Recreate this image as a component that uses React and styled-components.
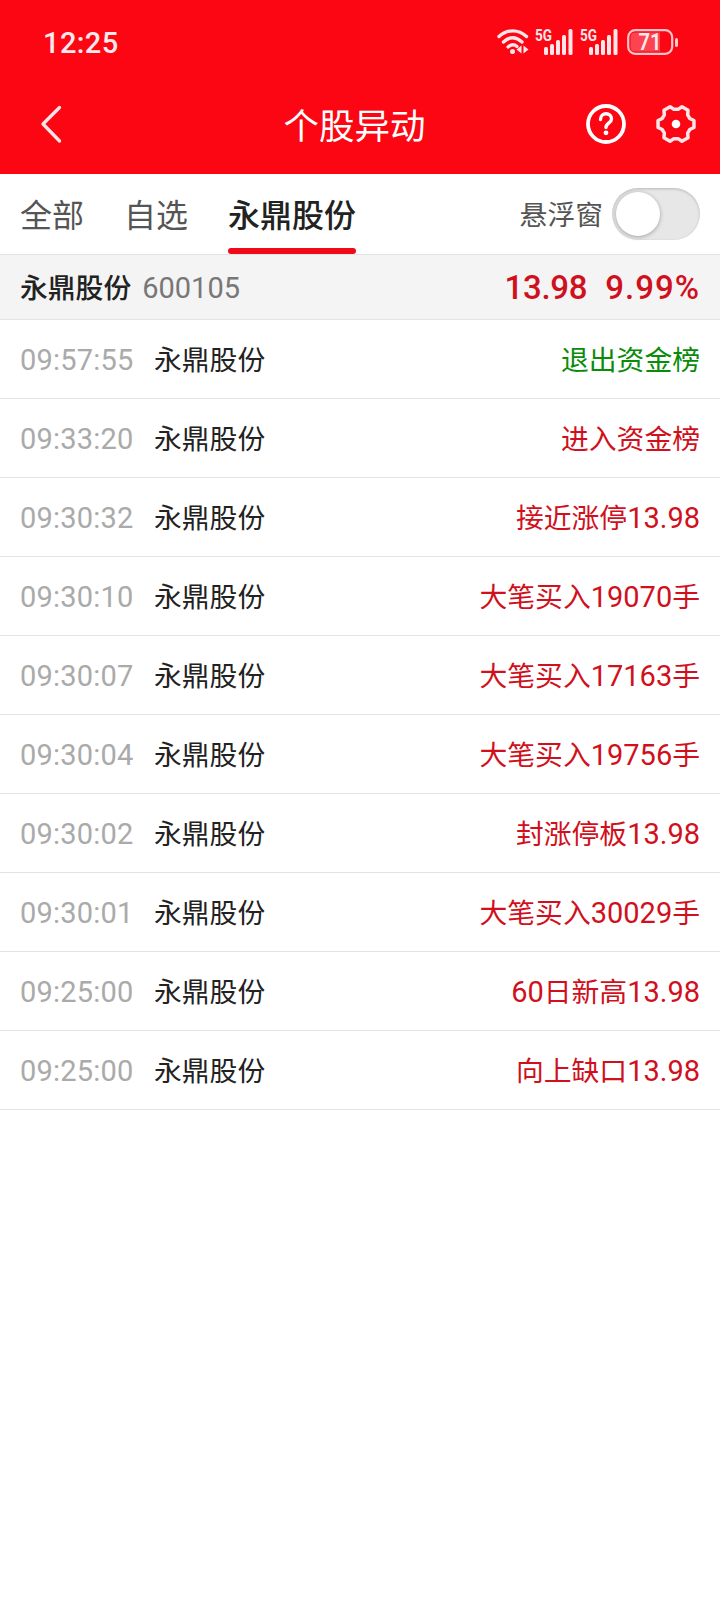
import React from "react";
import styled, { createGlobalStyle } from "styled-components";

const cjk = '"Noto Sans CJK SC", sans-serif';

const GlobalStyle = createGlobalStyle`
  * { box-sizing: border-box; }
  body { margin: 0; background: #fff; font-family: ${cjk}; }
`;

const Screen = styled.main`
  display: flex;
  flex-direction: column;
  width: 720px;
  min-height: 1610px;
  background: #fff;
`;

const Header = styled.header`
  height: 174px;
  background: #fb0612;
  color: #fff;
`;

const StatusBar = styled.div`
  display: flex;
  align-items: center;
  justify-content: space-between;
  height: 84px;
  padding: 0 41px 0 43px;
`;

const Clock = styled.time`
  padding-top: 1px;
  font: 500 29px/36px Roboto, sans-serif;
  letter-spacing: 0.4px;
  color: #ffe9ec;
`;

const StatusIcons = styled.div`
  display: flex;
  align-items: center;
`;

const StatusSvg = styled.svg`
  display: block;
  margin-left: ${(p) => p.$gap || 0}px;
`;

const TitleBar = styled.div`
  display: grid;
  grid-template-columns: 110px 1fr 121px;
  align-items: center;
  height: 80px;
  padding: 0 24px 0 35px;
`;

const Title = styled.h1`
  margin: 0;
  padding-right: 11px;
  font-size: 35.5px;
  line-height: 50px;
  font-weight: 400;
  text-align: center;
`;

const Actions = styled.div`
  display: flex;
  justify-content: flex-end;
  gap: 30px;
`;

const IconButton = styled.button`
  display: flex;
  padding: 0;
  border: 0;
  background: none;
  color: inherit;
`;

const TabBar = styled.nav`
  display: flex;
  justify-content: space-between;
  height: 81px;
  padding: 0 20px;
  border-bottom: 1px solid #e3e3e3;
`;

const Tabs = styled.div`
  display: flex;
  gap: 40px;
`;

const Tab = styled.button`
  display: flex;
  flex-direction: column;
  justify-content: space-between;
  height: 80px;
  padding: 15px 0 0;
  border: 0;
  background: none;
  font: ${(p) => (p.$active ? 500 : 400)} 32px/48px ${cjk};
  color: ${(p) => (p.$active ? "#222" : "#555")};

  &::after {
    content: "";
    width: 100%;
    height: 6px;
    border-radius: 3px;
    background: ${(p) => (p.$active ? "#f00a18" : "transparent")};
  }
`;

const FloatSetting = styled.label`
  display: flex;
  align-items: center;
  gap: 9px;
  font-size: 27.8px;
  line-height: 40px;
  color: #555;
`;

const Caption = styled.span`
  padding-bottom: 2px;
`;

const Switch = styled.span`
  display: flex;
  width: 88px;
  height: 52px;
  padding: 4px;
  border-radius: 26px;
  background: #e7e7e7;
  box-shadow: inset 0 1px 3px rgba(0, 0, 0, 0.2);
`;

const Knob = styled.span`
  width: 44px;
  height: 44px;
  border-radius: 50%;
  background: #fff;
  box-shadow: 0 1px 4px rgba(0, 0, 0, 0.3);
`;

const Summary = styled.section`
  display: flex;
  align-items: center;
  justify-content: space-between;
  height: 65px;
  padding: 0 20px;
  background: #f4f4f4;
  border-bottom: 1px solid #e3e3e3;
`;

const Group = styled.div`
  display: flex;
  align-items: center;
  gap: ${(p) => p.$gap}px;
`;

const Hanzi = styled.span`
  padding-bottom: 3px;
`;

const StockName = styled(Hanzi)`
  font-size: 27.8px;
  line-height: 40px;
  font-weight: ${(p) => (p.$strong ? 500 : 400)};
  color: #222;
`;

const Digits = styled.span`
  padding-top: 1px;
  font: 400 29px/40px Roboto, sans-serif;
  color: ${(p) => p.$color || "inherit"};
`;

const Quote = styled.span`
  padding-top: 1px;
  font: 500 33px/40px Roboto, sans-serif;
  letter-spacing: ${(p) => p.$spacing}px;
  color: #d0101c;
`;

const List = styled.ul`
  margin: 0;
  padding: 0;
  list-style: none;
`;

const Row = styled.li`
  display: flex;
  align-items: center;
  justify-content: space-between;
  height: 79px;
  padding: 0 20px;
  border-bottom: 1px solid #e3e3e3;
`;

const Time = styled.span`
  width: 114px;
  padding-top: 1px;
  font: 400 29px/40px Roboto, sans-serif;
  letter-spacing: 0.2px;
  color: #aaa;
`;

const Event = styled.span`
  display: flex;
  align-items: center;
  font-size: 27.8px;
  line-height: 40px;
  color: ${(p) => (p.$down ? "#0a8c0a" : "#d0101c")};
`;

const events = [
  { time: "09:57:55", text: "退出资金榜", down: true },
  { time: "09:33:20", text: "进入资金榜" },
  { time: "09:30:32", text: "接近涨停13.98" },
  { time: "09:30:10", text: "大笔买入19070手" },
  { time: "09:30:07", text: "大笔买入17163手" },
  { time: "09:30:04", text: "大笔买入19756手" },
  { time: "09:30:02", text: "封涨停板13.98" },
  { time: "09:30:01", text: "大笔买入30029手" },
  { time: "09:25:00", text: "60日新高13.98" },
  { time: "09:25:00", text: "向上缺口13.98" },
];

const renderMixed = (text) =>
  text
    .split(/([\d.]+)/)
    .filter(Boolean)
    .map((part, i) =>
      /^\d/.test(part) ? <Digits key={i}>{part}</Digits> : <Hanzi key={i}>{part}</Hanzi>
    );

const Wifi = () => (
  <StatusSvg width="32" height="26" viewBox="0 0 32 26" fill="none" stroke="#ffe4e8" strokeLinecap="round">
    <path d="M2 7.500C10 0 21.500 0 29.500 7.500" strokeWidth="3.400" />
    <path d="M6.500 13C12.500 7.500 19 7.500 25 13" strokeWidth="3.400" />
    <path d="M11 18C14 15.300 17.500 15.300 20 17.500" strokeWidth="3.200" />
    <circle cx="15.500" cy="22.500" r="2.500" fill="#ffe4e8" stroke="none" />
    <path d="M24.500 16.500V24.500L19.500 20.500ZM26.500 16.500V24.500L31.500 20.500Z" fill="#ffe4e8" stroke="none" />
  </StatusSvg>
);

const Signal = ({ gap }) => (
  <StatusSvg $gap={gap} width="38" height="38" viewBox="0 -6 38 38" fill="#ffe4e8">
    <text x="0" y="11.800" fontFamily="Roboto, sans-serif" fontWeight="700" fontSize="16" textLength="17" lengthAdjust="spacingAndGlyphs">5G</text>
    <rect x="9" y="18" width="4" height="8" rx="1.500" />
    <rect x="15" y="15" width="4" height="11" rx="1.500" />
    <rect x="21" y="11" width="4" height="15" rx="1.500" />
    <rect x="27" y="6" width="4" height="20" rx="1.500" />
    <rect x="33.500" y="0" width="4" height="26" rx="1.500" />
  </StatusSvg>
);

const Battery = () => (
  <StatusSvg $gap={9} width="52" height="26" viewBox="0 0 52 26">
    <rect x="1.200" y="1.200" width="44" height="23.600" rx="7" fill="none" stroke="#ffc4ca" strokeWidth="2.200" />
    <path d="M8 3.500H33V22.500H8Q3.500 22.500 3.500 18V8Q3.500 3.500 8 3.500Z" fill="#fc4350" />
    <rect x="48" y="9" width="3" height="9" rx="1.500" fill="#ffc4ca" />
    <text x="11.500" y="21" fontFamily="Roboto, sans-serif" fontWeight="600" fontSize="23" textLength="23" lengthAdjust="spacingAndGlyphs" fill="#ffe9ec">71</text>
  </StatusSvg>
);

const BackIcon = () => (
  <svg width="32" height="40" viewBox="0 0 32 40" fill="none" stroke="#ffe4e8" strokeWidth="3.300" strokeLinecap="round" strokeLinejoin="round">
    <path d="M24.500 3.500L8 20L24.500 37" />
  </svg>
);

const HelpIcon = () => (
  <svg width="40" height="40" viewBox="0 0 40 40" fill="none" stroke="#fff" strokeLinecap="round">
    <circle cx="20" cy="20" r="18" strokeWidth="3.800" />
    <path d="M14.500 15.500C14.500 8 25.500 8 25.500 15C25.500 19 20 19 20 23.500" strokeWidth="3.400" />
    <circle cx="20" cy="28.800" r="2.400" fill="#fff" stroke="none" />
  </svg>
);

// Six flat-tipped teeth, each described by its two tip and two root corners.
const gearPoints = [0, 60, 120, 180, 240, 300]
  .flatMap((a) => [[a - 11, 18.3], [a + 11, 18.3], [a + 22, 14.8], [a + 38, 14.8]])
  .map(([deg, r]) => {
    const t = (deg * Math.PI) / 180;
    return `${(20 + r * Math.cos(t)).toFixed(2)},${(20 + r * Math.sin(t)).toFixed(2)}`;
  })
  .join(" ");

const GearIcon = () => (
  <svg width="40" height="40" viewBox="0 0 40 40" fill="none" stroke="#ffe4e8" strokeWidth="3.500" strokeLinejoin="round">
    <polygon points={gearPoints} />
    <circle cx="20" cy="20" r="4.300" fill="#fff" stroke="none" />
  </svg>
);

export default function App() {
  return (
    <Screen>
      <GlobalStyle />
      <Header>
        <StatusBar>
          <Clock>12:25</Clock>
          <StatusIcons>
            <Wifi />
            <Signal gap={6} />
            <Signal gap={7} />
            <Battery />
          </StatusIcons>
        </StatusBar>
        <TitleBar>
          <IconButton aria-label="返回"><BackIcon /></IconButton>
          <Title>个股异动</Title>
          <Actions>
            <IconButton aria-label="帮助"><HelpIcon /></IconButton>
            <IconButton aria-label="设置"><GearIcon /></IconButton>
          </Actions>
        </TitleBar>
      </Header>
      <TabBar>
        <Tabs>
          <Tab>全部</Tab>
          <Tab>自选</Tab>
          <Tab $active>永鼎股份</Tab>
        </Tabs>
        <FloatSetting>
          <Caption>悬浮窗</Caption>
          <Switch><Knob /></Switch>
        </FloatSetting>
      </TabBar>
      <Summary>
        <Group $gap={11}>
          <StockName $strong>永鼎股份</StockName>
          <Digits $color="#777">600105</Digits>
        </Group>
        <Group $gap={18}>
          <Quote $spacing={-0.3}>13.98</Quote>
          <Quote $spacing={1}>9.99%</Quote>
        </Group>
      </Summary>
      <List>
        {events.map((e, i) => (
          <Row key={i}>
            <Group $gap={20}>
              <Time>{e.time}</Time>
              <StockName>永鼎股份</StockName>
            </Group>
            <Event $down={e.down}>{renderMixed(e.text)}</Event>
          </Row>
        ))}
      </List>
    </Screen>
  );
}
